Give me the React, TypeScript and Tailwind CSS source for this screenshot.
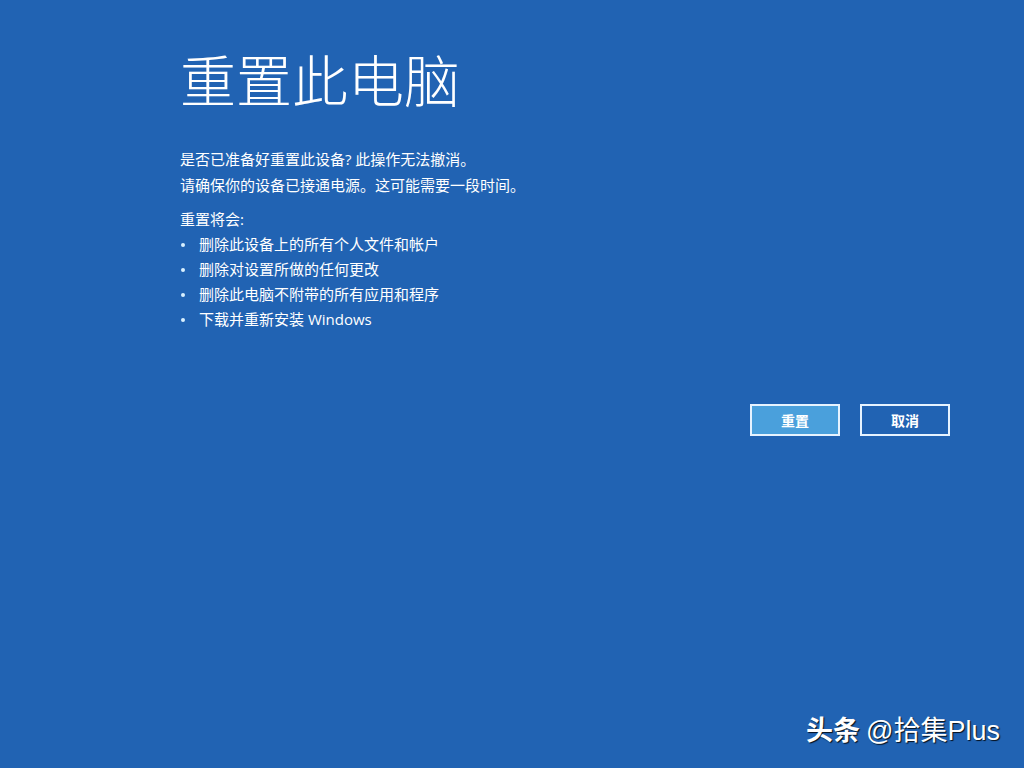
const font = { fontFamily: '"Open Sans", "Noto Sans CJK SC", sans-serif' };
const markFont = { fontFamily: '"Liberation Sans", "Noto Sans CJK SC", sans-serif' };

const items = [
  "删除此设备上的所有个人文件和帐户",
  "删除对设置所做的任何更改",
  "删除此电脑不附带的所有应用和程序",
  "下载并重新安装 Windows",
];

export default function App() {
  return (
    <div
      className="relative h-[768px] w-[1024px] overflow-hidden bg-[#2163b3] text-white"
      style={font}
    >
      <div className="flex flex-col pl-[180px] pt-[48px]">
        {/* title */}
        <h1 className="text-[56px] font-light leading-[64px]">重置此电脑</h1>

        {/* warning */}
        <div className="mt-[34px] flex flex-col text-[15px] leading-[26px]">
          <p>是否已准备好重置此设备? 此操作无法撤消。</p>
          <p>请确保你的设备已接通电源。这可能需要一段时间。</p>
        </div>

        {/* list */}
        <div className="mt-[9px] flex flex-col text-[15px] leading-[25px]">
          <p>重置将会:</p>
          {items.map((t) => (
            <div key={t} className="flex items-center">
              <span className="ml-[1px] mr-[14px] h-[4px] w-[4px] rounded-full bg-[#d8f0ff]" />
              <span>{t}</span>
            </div>
          ))}
        </div>
      </div>

      {/* buttons */}
      <div className="mt-[72px] flex justify-end gap-[20px] pr-[74px]">
        <button className="h-[32px] w-[90px] border-2 border-[#e6f3ff] bg-[#4aa0dc] text-[14px] font-bold text-white">
          重置
        </button>
        <button className="h-[32px] w-[90px] border-2 border-[#e6f3ff] bg-[#2163b3] text-[14px] font-bold text-white">
          取消
        </button>
      </div>

      {/* watermark */}
      <div
        className="absolute bottom-[23px] right-[24px] flex items-center gap-[6px] text-[27px] leading-none [text-shadow:1px_1px_1px_rgba(0,0,0,0.85)]"
        style={markFont}
      >
        <span className="font-bold">头条</span>
        <span>@拾集Plus</span>
      </div>
    </div>
  );
}
